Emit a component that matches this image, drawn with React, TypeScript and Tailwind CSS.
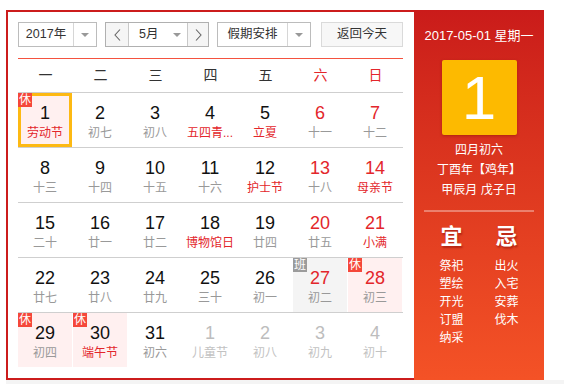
import React from "react";

type Day = {
  n: number;
  lunar: string;
  red?: boolean; // number in red (weekend)
  fest?: boolean; // lunar text in red
  other?: boolean; // not this month
  badge?: "休" | "班";
  selected?: boolean;
};

const weeks: Day[][] = [
  [
    { n: 1, lunar: "劳动节", fest: true, badge: "休", selected: true },
    { n: 2, lunar: "初七" },
    { n: 3, lunar: "初八" },
    { n: 4, lunar: "五四青...", fest: true },
    { n: 5, lunar: "立夏", fest: true },
    { n: 6, lunar: "十一", red: true },
    { n: 7, lunar: "十二", red: true },
  ],
  [
    { n: 8, lunar: "十三" },
    { n: 9, lunar: "十四" },
    { n: 10, lunar: "十五" },
    { n: 11, lunar: "十六" },
    { n: 12, lunar: "护士节", fest: true },
    { n: 13, lunar: "十八", red: true },
    { n: 14, lunar: "母亲节", red: true, fest: true },
  ],
  [
    { n: 15, lunar: "二十" },
    { n: 16, lunar: "廿一" },
    { n: 17, lunar: "廿二" },
    { n: 18, lunar: "博物馆日", fest: true },
    { n: 19, lunar: "廿四" },
    { n: 20, lunar: "廿五", red: true },
    { n: 21, lunar: "小满", red: true, fest: true },
  ],
  [
    { n: 22, lunar: "廿七" },
    { n: 23, lunar: "廿八" },
    { n: 24, lunar: "廿九" },
    { n: 25, lunar: "三十" },
    { n: 26, lunar: "初一" },
    { n: 27, lunar: "初二", red: true, badge: "班" },
    { n: 28, lunar: "初三", red: true, badge: "休" },
  ],
  [
    { n: 29, lunar: "初四", badge: "休" },
    { n: 30, lunar: "端午节", fest: true, badge: "休" },
    { n: 31, lunar: "初六" },
    { n: 1, lunar: "儿童节", other: true },
    { n: 2, lunar: "初八", other: true },
    { n: 3, lunar: "初九", other: true },
    { n: 4, lunar: "初十", other: true },
  ],
];

const weekdays = ["一", "二", "三", "四", "五", "六", "日"];
const yi = ["祭祀", "塑绘", "开光", "订盟", "纳采"];
const ji = ["出火", "入宅", "安葬", "伐木"];

const font = { fontFamily: '"Liberation Sans", "Noto Sans CJK SC", sans-serif' };

function Caret() {
  return (
    <span className="block w-0 h-0 border-x-[4px] border-t-[4px] border-x-transparent border-t-[#999]" />
  );
}

function Chevron({ dir }: { dir: "left" | "right" }) {
  return (
    <svg width="7" height="12" viewBox="0 0 7 12" fill="none">
      <polyline
        points={dir === "left" ? "6,0.5 1,6 6,11.5" : "1,0.5 6,6 1,11.5"}
        stroke="#666"
        strokeWidth="1.1"
      />
    </svg>
  );
}

function Cell({ d }: { d: Day }) {
  let bg = "bg-white";
  if (d.badge === "休") bg = "bg-[#fff0f0]";
  if (d.badge === "班") bg = "bg-[#f4f4f4]";

  let numColor = "text-[#111]";
  if (d.red) numColor = "text-[#e3262b]";
  if (d.other) numColor = "text-[#bdbdbd]";

  let lunarColor = "text-[#999]";
  if (d.fest) lunarColor = "text-[#e3262b]";
  if (d.other) lunarColor = "text-[#c2c2c2]";

  return (
    <div className="w-[55px] h-[54px] pr-px">
      <div
        className={`relative w-[54px] h-[54px] ${bg} ${
          d.selected ? "border-[3px] border-[#fdb913]" : ""
        } flex flex-col items-center ${d.selected ? "pt-[7px]" : "pt-[10px]"}`}
      >
        {d.badge && (
          <span
            className={`absolute ${d.selected ? "-top-[3px] -left-[3px]" : "top-0 left-0"} w-[14px] h-[14px] text-[12px] leading-[14px] text-center text-white ${
              d.badge === "休" ? "bg-[#f5473a]" : "bg-[#9b9b9b]"
            }`}
          >
            {d.badge}
          </span>
        )}
        <span className={`text-[18px] leading-[20px] ${numColor}`}>{d.n}</span>
        <span
          className={`mt-[2px] text-center text-[12px] leading-[16px] whitespace-nowrap ${lunarColor}`}
        >
          {d.lunar}
        </span>
      </div>
    </div>
  );
}

export default function App() {
  return (
    <div className="w-[564px] h-[384px] bg-white overflow-hidden" style={font}>
      <div className="ml-[6px] mt-[10px] flex h-[370px] w-[538px]">
        {/* calendar body */}
        <div className="w-[408px] h-full border-l-2 border-y-2 border-[#cc1c1c] pl-[10px] pr-[11px] pt-[10px]">
          {/* controls */}
          <div className="flex h-[25px] text-[12.5px] text-[#333]">
            <div className="flex w-[79px] border border-[#bcbcbc] bg-white">
              <span className="w-[54px] flex items-center justify-center">2017年</span>
              <span className="flex-1 border-l border-[#d6d6d6] flex items-center justify-center">
                <Caret />
              </span>
            </div>
            <div className="ml-[8px] flex w-[104px] border border-[#b0b0b0] bg-white">
              <span className="w-[22px] bg-[#f5f5f5] flex items-center justify-center">
                <Chevron dir="left" />
              </span>
              <span className="w-[60px] border-x border-[#c8c8c8] flex items-center pl-[10px] gap-[15px]">
                5月
                <Caret />
              </span>
              <span className="flex-1 bg-[#f5f5f5] flex items-center justify-center">
                <Chevron dir="right" />
              </span>
            </div>
            <div className="ml-[8px] flex w-[94px] border border-[#bcbcbc] bg-white">
              <span className="w-[69px] flex items-center justify-center">假期安排</span>
              <span className="flex-1 border-l border-[#d6d6d6] flex items-center justify-center">
                <Caret />
              </span>
            </div>
            <div className="ml-[10px] w-[82px] border border-[#dadada] bg-[#f7f7f7] flex items-center justify-center">
              返回今天
            </div>
          </div>

          <div className="mt-[11px] h-px bg-[#f4523f]" />

          {/* weekday header */}
          <div className="grid grid-cols-7 h-[34px] border-b border-[#cfcfcf] text-[14px]">
            {weekdays.map((w, i) => (
              <div
                key={w}
                className={`flex items-center justify-center ${i >= 5 ? "text-[#e3262b]" : "text-[#333]"}`}
              >
                {w}
              </div>
            ))}
          </div>

          {/* weeks */}
          {weeks.map((week, wi) => (
            <div
              key={wi}
              className={`flex ${wi < weeks.length - 1 ? "border-b border-[#cfcfcf]" : ""}`}
            >
              {week.map((d, di) => (
                <Cell key={di} d={d} />
              ))}
            </div>
          ))}
        </div>

        {/* side panel */}
        <div className="w-[130px] h-full bg-gradient-to-b from-[#ca1b1a] to-[#f45226] flex flex-col items-center text-white">
          <div className="mt-[16px] text-[13px] leading-[20px]">2017-05-01 星期一</div>
          <div className="mt-[14px] w-[75px] h-[75px] rounded-[2px] bg-[#fdba00] shadow-[0_1px_3px_rgba(120,20,0,0.45)] flex items-center justify-center text-[62px] leading-none">
            1
          </div>
          <div className="mt-[5px] text-[12px] leading-[20px] text-center">
            <div>四月初六</div>
            <div>丁酉年【鸡年】</div>
            <div>甲辰月 戊子日</div>
          </div>
          <div className="mt-[10px] w-[110px] h-[2px] bg-white/35" />
          <div className="mt-[14px] flex gap-[5px]">
            <div className="w-[50px] flex flex-col items-center">
              <div className="text-[22px] leading-[22px] font-bold [text-shadow:1px_2px_2px_rgba(120,0,0,0.45)]">
                宜
              </div>
              <div className="mt-[9px] text-[12px] leading-[18px] text-center">
                {yi.map((t) => (
                  <div key={t}>{t}</div>
                ))}
              </div>
            </div>
            <div className="w-[50px] flex flex-col items-center">
              <div className="text-[22px] leading-[22px] font-bold [text-shadow:1px_2px_2px_rgba(120,0,0,0.45)]">
                忌
              </div>
              <div className="mt-[9px] text-[12px] leading-[18px] text-center">
                {ji.map((t) => (
                  <div key={t}>{t}</div>
                ))}
              </div>
            </div>
          </div>
        </div>
      </div>
      <div className="ml-[6px] h-[4px] bg-[#f4f4f4]" />
    </div>
  );
}
